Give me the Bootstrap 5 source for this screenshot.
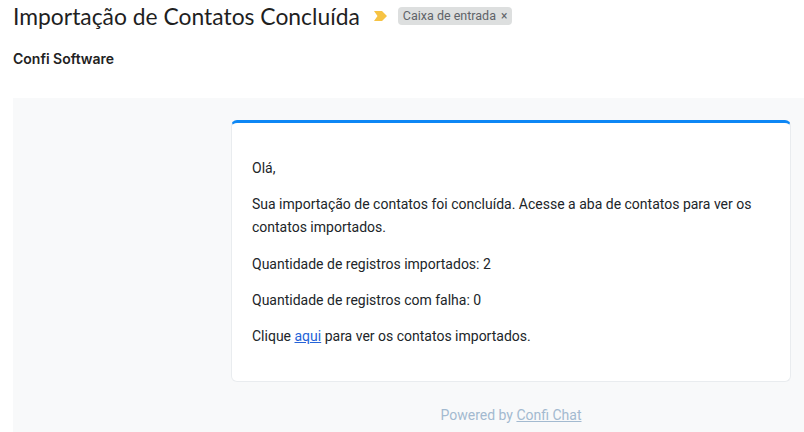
<!DOCTYPE html>
<html lang="pt-BR">
<head>
    <meta charset="UTF-8">
    <meta name="viewport" content="width=device-width, initial-scale=1.0">
    <link href="https://cdn.jsdelivr.net/npm/bootstrap@5.3.0/dist/css/bootstrap.min.css" rel="stylesheet">
    <style>
        html, body { height: 432px; overflow: hidden; }
        body { font-family: Roboto, sans-serif; background: #fff; color: #202124; }
        .mail-head { padding: 0 0 0 13px; height: 32px; }
        .mail-title { font-family: Lato, sans-serif; font-size: 22.87px; font-weight: 400; line-height: 32px; margin: 0; color: #1f1f1f; }
        .mail-tag { background: #dddfdf; color: #5f6368; font-size: 12.5px; line-height: 18px; border-radius: 4px; padding: 0 5px; margin-left: 11px; }
        .mail-tag-x { margin-left: 5px; font-size: 12px; }
        .mail-arrow { margin-left: 14px; }
        .mail-sender { font-family: Inter, sans-serif; padding-left: 13px; margin-top: 18px; height: 48px; font-size: 14px; font-weight: 600; line-height: 18px; color: #222; }
        .mail-panel { margin-left: 13px; background: #f8f9fa; padding: 22px 13px 0 218px; height: 334px; }
        .notice-box { border: 1px solid #e9ecef; border-top: 3px solid #0d87f5; border-radius: 6px; background: #fff; height: 262px; padding: 34px 20px 0; font-size: 14px; line-height: 23px; color: #212529; }
        .notice-box p { margin-bottom: 13.25px; }
        .notice-box a { color: #2563d8; }
        .mail-foot { margin-top: 21px; color: #a3bad0; font-size: 14px; line-height: 24px; text-align: center; }
        .mail-foot a { color: #a3bad0; }
    </style>
    <title>Importação de Contatos Concluída</title>
</head>
<body>

    <!-- Cabecalho -->
    <div class="mail-head d-flex align-items-center">
        <h1 class="mail-title">Importação de Contatos Concluída</h1>
        <svg class="mail-arrow" width="13" height="10" viewBox="0 0 13 10"><path d="M0 0H8L13 5L8 10H0L3.5 5Z" fill="#f6c344"/></svg>
        <span class="mail-tag d-inline-flex align-items-center">Caixa de entrada<span class="mail-tag-x">×</span></span>
    </div>
    <div class="mail-sender">Confi Software</div>

    <!-- Corpo -->
    <div class="mail-panel">
        <div class="notice-box">
            <p>Olá,</p>
            <p>Sua importação de contatos foi concluída. Acesse a aba de contatos para ver os contatos importados.</p>
            <p>Quantidade de registros importados: 2</p>
            <p>Quantidade de registros com falha: 0</p>
            <p>Clique <a href="#">aqui</a> para ver os contatos importados.</p>
        </div>
        <div class="mail-foot">Powered by <a href="#">Confi Chat</a></div>
    </div>

    <script src="https://cdn.jsdelivr.net/npm/bootstrap@5.3.0/dist/js/bootstrap.bundle.min.js"></script>
</body>
</html>
